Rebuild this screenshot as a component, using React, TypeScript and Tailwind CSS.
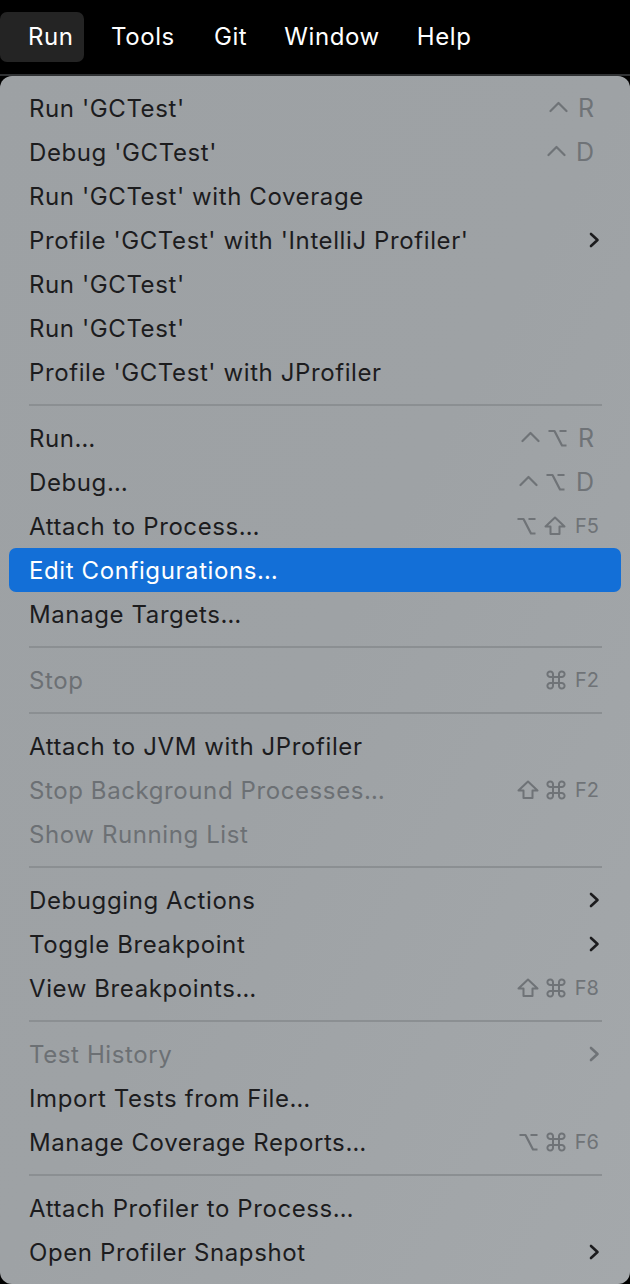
import React from "react";

type Item = {
  label: string;
  keys?: string[];
  sub?: boolean;
  disabled?: boolean;
  active?: boolean;
};

const groups: Item[][] = [
  [
    { label: "Run 'GCTest'", keys: ["ctrl", "R"] },
    { label: "Debug 'GCTest'", keys: ["ctrl", "D"] },
    { label: "Run 'GCTest' with Coverage" },
    { label: "Profile 'GCTest' with 'IntelliJ Profiler'", sub: true },
    { label: "Run 'GCTest'" },
    { label: "Run 'GCTest'" },
    { label: "Profile 'GCTest' with JProfiler" },
  ],
  [
    { label: "Run…", keys: ["ctrl", "opt", "R"] },
    { label: "Debug…", keys: ["ctrl", "opt", "D"] },
    { label: "Attach to Process…", keys: ["opt", "shift", "F5"] },
    { label: "Edit Configurations…", active: true },
    { label: "Manage Targets…" },
  ],
  [{ label: "Stop", keys: ["cmd", "F2"], disabled: true }],
  [
    { label: "Attach to JVM with JProfiler" },
    { label: "Stop Background Processes…", keys: ["shift", "cmd", "F2"], disabled: true },
    { label: "Show Running List", disabled: true },
  ],
  [
    { label: "Debugging Actions", sub: true },
    { label: "Toggle Breakpoint", sub: true },
    { label: "View Breakpoints…", keys: ["shift", "cmd", "F8"] },
  ],
  [
    { label: "Test History", sub: true, disabled: true },
    { label: "Import Tests from File…" },
    { label: "Manage Coverage Reports…", keys: ["opt", "cmd", "F6"] },
  ],
  [
    { label: "Attach Profiler to Process…" },
    { label: "Open Profiler Snapshot", sub: true },
  ],
];

const KEY_GRAY = "#6f7377";

function Chevron({ dim }: { dim?: boolean }) {
  return (
    <svg width="12" height="16" viewBox="0 0 12 16" className="mr-[-1px]">
      <path
        d="M3 2 L9.5 8 L3 14"
        fill="none"
        stroke={dim ? KEY_GRAY : "#1c1c1e"}
        strokeWidth="2.6"
        strokeLinecap="round"
        strokeLinejoin="round"
      />
    </svg>
  );
}

// modifier glyphs drawn to match the macOS menu symbols
function Mod({ name }: { name: string }) {
  const common = {
    fill: "none",
    stroke: KEY_GRAY,
    strokeWidth: 2.2,
    strokeLinecap: "round" as const,
    strokeLinejoin: "round" as const,
  };
  if (name === "ctrl")
    return (
      <svg width="19" height="20" viewBox="0 0 19 20">
        <path d="M1.5 13 L9.5 5 L17.5 13" {...common} />
      </svg>
    );
  if (name === "opt")
    return (
      <svg width="21" height="20" viewBox="0 0 21 20">
        <path d="M1.5 3 H7.5 L15 17.5 H19.5 M12.5 3 H19.5" {...common} strokeLinecap="butt" />
      </svg>
    );
  if (name === "shift")
    return (
      <svg width="22" height="20" viewBox="0 0 22 20">
        <path d="M11 1.5 L20.5 10.5 H15.5 V18 H6.5 V10.5 H1.5 Z" {...common} strokeWidth={2} />
      </svg>
    );
  return (
    <svg width="20" height="20" viewBox="0 0 20 20">
      <path
        d="M7 7 V4.5 A2.8 2.8 0 1 0 4.5 7 H15.5 A2.8 2.8 0 1 0 13 4.5 V15.5 A2.8 2.8 0 1 0 15.5 13 H4.5 A2.8 2.8 0 1 0 7 15.5 Z"
        {...common}
        strokeWidth={2}
      />
    </svg>
  );
}

function Keys({ keys }: { keys: string[] }) {
  const mods = keys.slice(0, -1);
  const last = keys[keys.length - 1];
  const isFKey = /^F\d/.test(last);
  return (
    <div className="flex items-center">
      <div className="flex items-center gap-[7px]">
        {mods.map((m, i) => (
          <Mod key={i} name={m} />
        ))}
      </div>
      <span
        className={
          isFKey
            ? "ml-[9px] text-[20px] leading-none text-[#6f7377]"
            : "ml-[10px] text-[25px] leading-none text-[#6f7377] mr-[5px]"
        }
      >
        {last}
      </span>
    </div>
  );
}

function Row({ item }: { item: Item }) {
  const text = item.active
    ? "text-white"
    : item.disabled
    ? "text-[#6c7074]"
    : "text-[#1c1c1e]";
  return (
    <div
      className={`mx-[9px] h-[44px] rounded-[7px] flex items-center justify-between pl-[20px] pr-[22px] ${
        item.active ? "bg-[#136fd7]" : ""
      }`}
    >
      <span className={`text-[24px] tracking-[0.6px] pt-[2px] ${text}`}>{item.label}</span>
      {item.keys && <Keys keys={item.keys} />}
      {item.sub && <Chevron dim={item.disabled} />}
    </div>
  );
}

export default function App() {
  return (
    <div className="w-[630px] h-[1284px] bg-black font-['Inter','Liberation_Sans',sans-serif] overflow-hidden flex flex-col">
      <div className="h-[74px] flex items-center text-white text-[24px] tracking-[0.6px] shrink-0">
        <div className="h-[50px] w-[84px] rounded-[7px] bg-[#242424] flex items-center pl-[28px]">
          Run
        </div>
        <span className="ml-[27px]">Tools</span>
        <span className="ml-[39px]">Git</span>
        <span className="ml-[37px]">Window</span>
        <span className="ml-[37px]">Help</span>
      </div>
      <div className="flex-1 border-t-[2px] border-[#303234] bg-black">
        <div className="h-full rounded-[12px] bg-gradient-to-br from-[#9da1a4] via-[#9ea2a5] to-[#a4a8ab] pt-[10px] pb-[10px]">
          {groups.map((g, gi) => (
            <div key={gi}>
              {gi > 0 && (
                <div className="h-[22px] flex items-center">
                  <div className="ml-[29px] w-[573px] h-[2px] bg-[#8b8f92]" />
                </div>
              )}
              {g.map((item, ii) => (
                <Row key={ii} item={item} />
              ))}
            </div>
          ))}
        </div>
      </div>
    </div>
  );
}
